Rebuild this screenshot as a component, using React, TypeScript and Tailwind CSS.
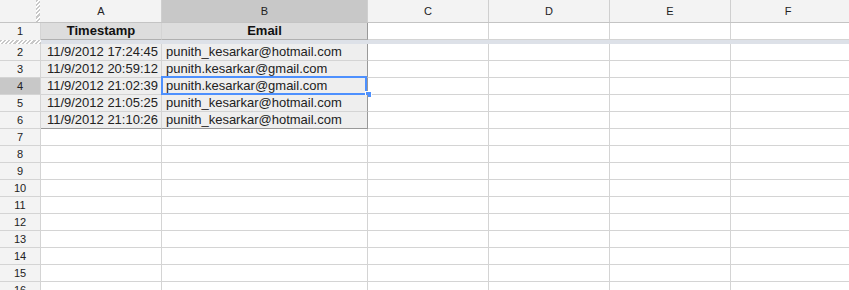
import React from "react";

const rows: [string, string][] = [
  ["11/9/2012 17:24:45", "punith_kesarkar@hotmail.com"],
  ["11/9/2012 20:59:12", "punith.kesarkar@gmail.com"],
  ["11/9/2012 21:02:39", "punith.kesarkar@gmail.com"],
  ["11/9/2012 21:05:25", "punith_kesarkar@hotmail.com"],
  ["11/9/2012 21:10:26", "punith_kesarkar@hotmail.com"],
];

const emptyRows = [7, 8, 9, 10, 11, 12, 13, 14, 15, 16];

function EmptyCells() {
  return (
    <>
      <div className="w-[121px] shrink-0 border-r border-b border-[#d4d4d4] bg-white" />
      <div className="w-[121px] shrink-0 border-r border-b border-[#d4d4d4] bg-white" />
      <div className="w-[121px] shrink-0 border-r border-b border-[#d4d4d4] bg-white" />
      <div className="flex-1 border-b border-[#d4d4d4] bg-white" />
    </>
  );
}

export default function App() {
  return (
    <div
      className="w-[849px] h-[290px] overflow-hidden bg-white text-[#222]"
      style={{ fontFamily: '"Liberation Sans", Arial, sans-serif' }}
    >
      {/* column headers */}
      <div className="flex h-[23px] border-b border-[#c4c4c4] bg-[#f3f3f3] text-[11px]">
        <div className="flex w-[40px] shrink-0">
          <div className="w-[36px]" />
          <div className="w-[4px] bg-[repeating-linear-gradient(135deg,#c8c8c8_0px,#c8c8c8_1.5px,#ffffff_1.5px,#ffffff_3px)]" />
        </div>
        <div className="w-[122px] shrink-0 border-r border-[#cfcfcf] flex items-center justify-center pl-[1px]">A</div>
        <div className="w-[206px] shrink-0 border-r border-[#cfcfcf] bg-[#c8c8c8] flex items-center justify-center">B</div>
        <div className="w-[121px] shrink-0 border-r border-[#cfcfcf] flex items-center justify-center">C</div>
        <div className="w-[121px] shrink-0 border-r border-[#cfcfcf] flex items-center justify-center">D</div>
        <div className="w-[121px] shrink-0 border-r border-[#cfcfcf] flex items-center justify-center">E</div>
        <div className="flex-1 flex items-center justify-center pr-[4px]">F</div>
      </div>

      {/* row 1 */}
      <div className="flex h-[17px]">
        <div className="w-[41px] shrink-0 border-r border-[#d4d4d4] bg-[#f3f3f3] text-[11px] flex items-center justify-center">1</div>
        <div className="w-[121px] shrink-0 border-r border-b border-[#d4d4d4] border-b-[#b0b0b0] bg-[#dddddd] flex items-center justify-center font-bold text-[13px] text-[#111]">
          Timestamp
        </div>
        <div className="w-[206px] shrink-0 border-r border-b border-r-[#999999] border-b-[#b0b0b0] bg-[#dddddd] flex items-center justify-center font-bold text-[13px] text-[#111]">
          Email
        </div>
        <EmptyCells />
      </div>

      {/* frozen bar */}
      <div className="flex h-[4px]">
        <div className="w-[41px] shrink-0 bg-[repeating-linear-gradient(135deg,#c8c8c8_0px,#c8c8c8_1.5px,#ffffff_1.5px,#ffffff_3px)]" />
        <div className="flex-1 bg-[#dde1e8]" />
      </div>

      {/* data rows */}
      {rows.map(([ts, email], i) => {
        const n = i + 2;
        const active = n === 4;
        const last = n === 6;
        return (
          <div key={n} className="flex h-[17px]">
            <div
              className={
                "w-[41px] shrink-0 border-r border-b border-[#d4d4d4] text-[11px] flex items-center justify-center " +
                (active ? "bg-[#c8c8c8]" : "bg-[#f3f3f3]")
              }
            >
              {n}
            </div>
            <div
              className={
                "w-[121px] shrink-0 border-r border-b border-[#d4d4d4] bg-[#eeeeee] flex items-center justify-end pr-[3px] text-[13px] " +
                (last ? "border-b-[#999999]" : "")
              }
            >
              {ts}
            </div>
            <div
              className={
                "relative w-[206px] shrink-0 border-r border-b border-[#d4d4d4] border-r-[#999999] bg-[#eeeeee] flex items-center pl-[4px] text-[13px] " +
                (last ? "border-b-[#999999]" : "")
              }
            >
              {email}
              {active && (
                <>
                  <div className="absolute left-[-1px] top-[-2px] w-[206px] h-[19px] border-2 border-[#4d90fe]" />
                  <div className="absolute right-[-5px] bottom-[-4px] w-[7px] h-[7px] bg-[#4d90fe] border border-white" />
                </>
              )}
            </div>
            <EmptyCells />
          </div>
        );
      })}

      {emptyRows.map((n) => (
        <div key={n} className="flex h-[17px]">
          <div className="w-[41px] shrink-0 border-r border-b border-[#d4d4d4] bg-[#f3f3f3] text-[11px] flex items-center justify-center">
            {n}
          </div>
          <div className="w-[121px] shrink-0 border-r border-b border-[#d4d4d4] bg-white" />
          <div className="w-[206px] shrink-0 border-r border-b border-[#d4d4d4] bg-white" />
          <EmptyCells />
        </div>
      ))}
    </div>
  );
}
